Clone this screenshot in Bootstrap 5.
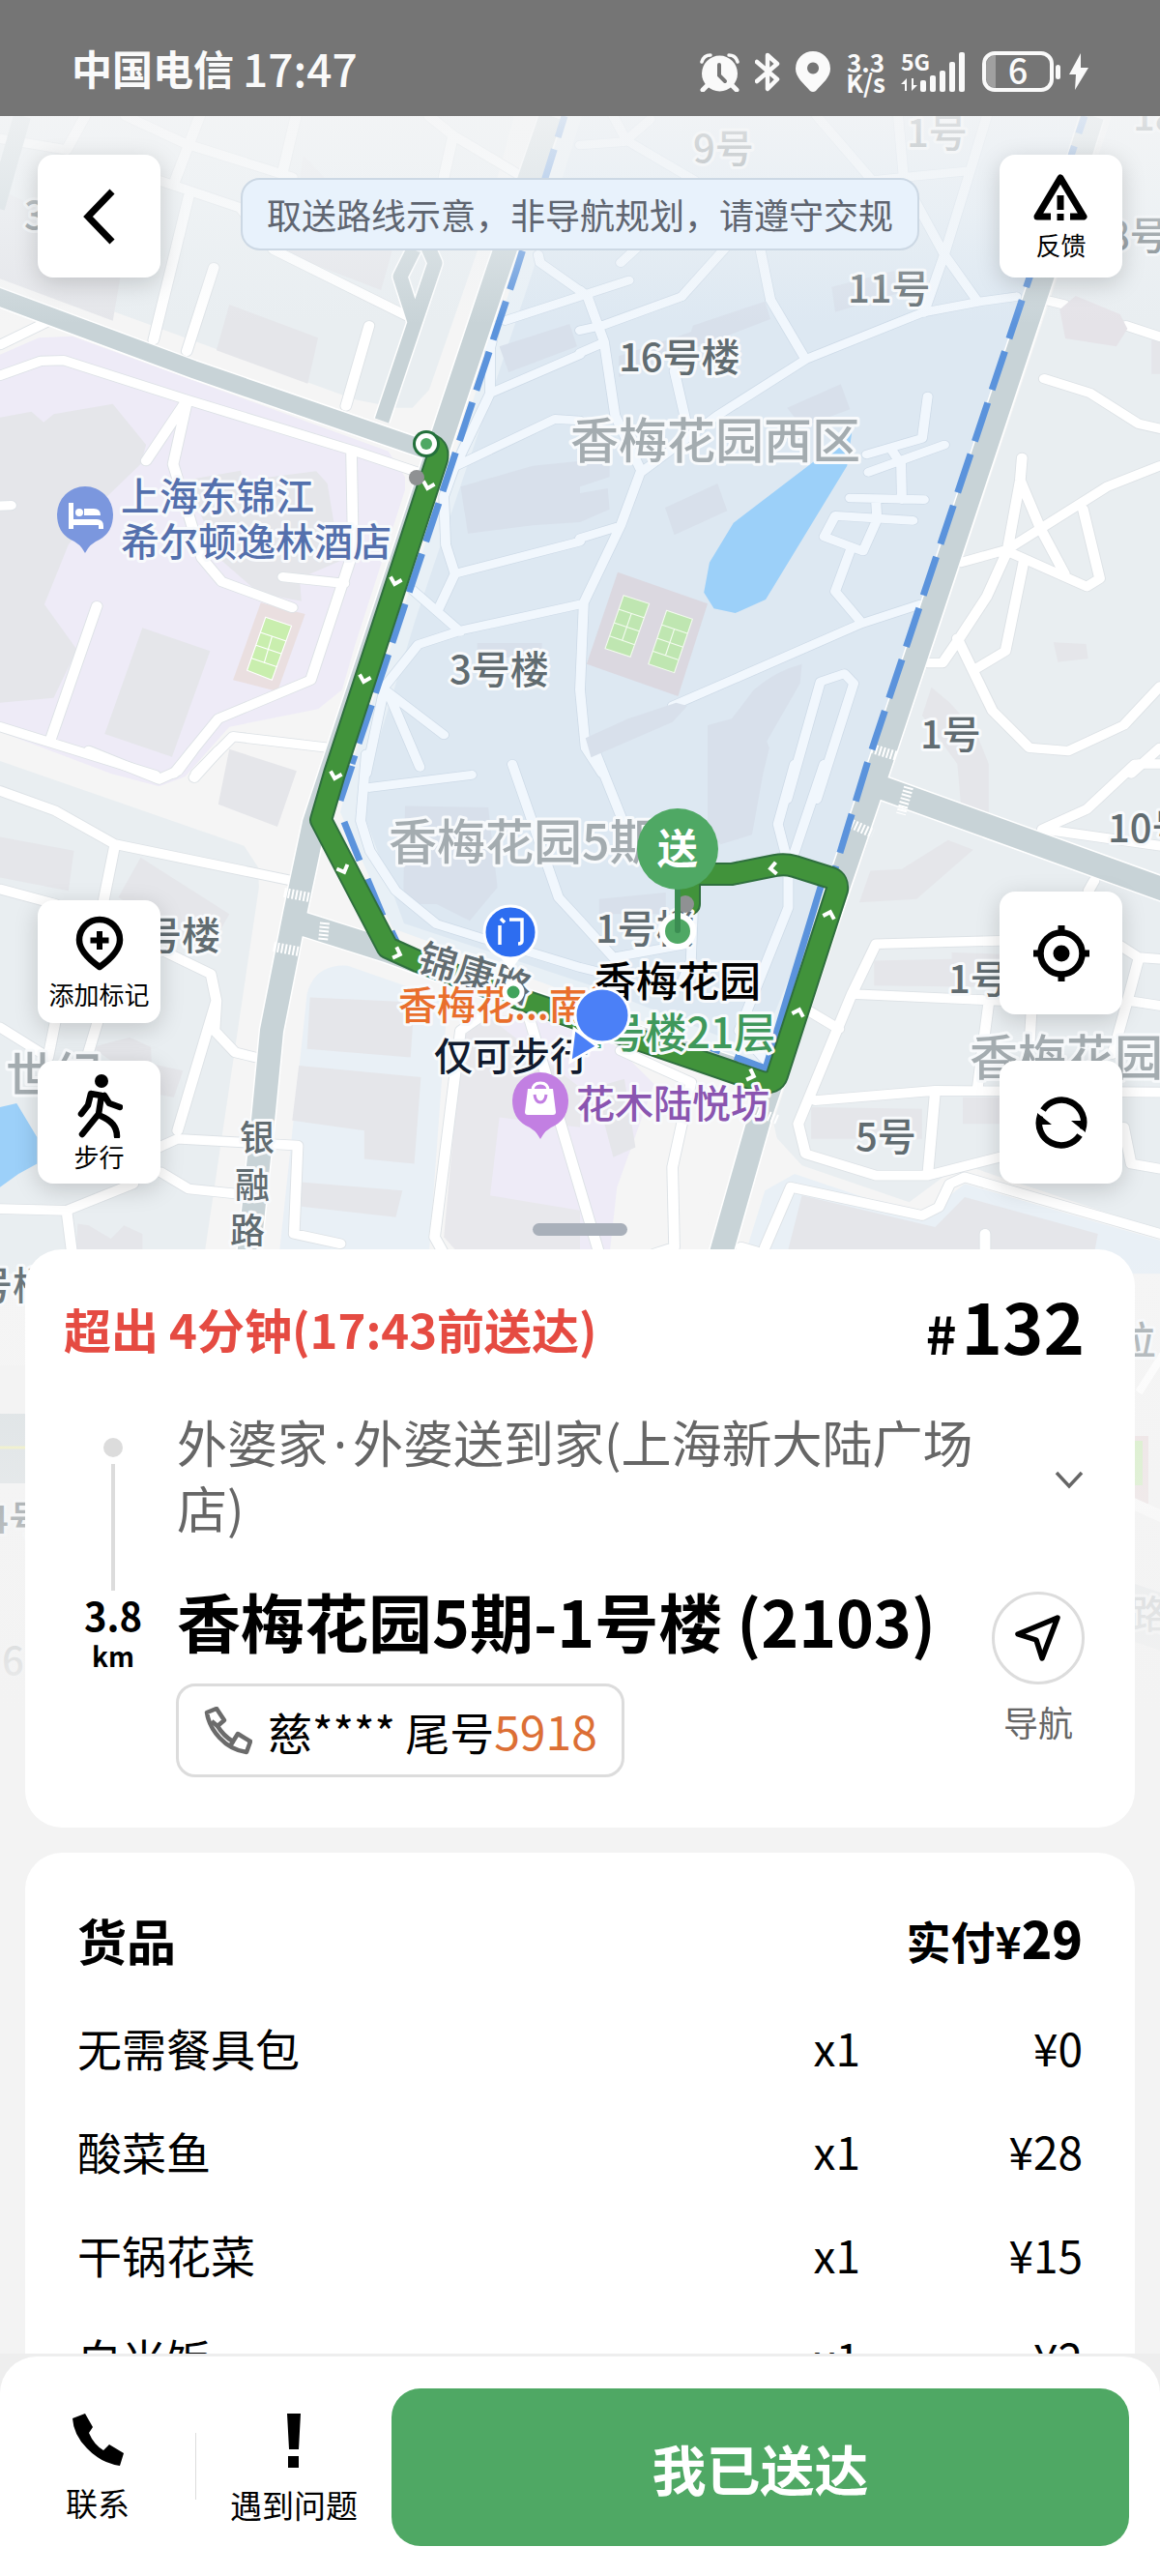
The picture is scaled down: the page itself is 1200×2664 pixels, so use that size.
<!DOCTYPE html>
<html lang="zh-CN">
<head>
<meta charset="utf-8">
<meta name="viewport" content="width=device-width, initial-scale=1">
<title>配送详情</title>
<link href="https://cdn.jsdelivr.net/npm/bootstrap@5.3.0/dist/css/bootstrap.min.css" rel="stylesheet">
<style>
:root { --green: #4fa864; --line: #dcdcdc; --muted: #666; }
body { font-family: "Noto Sans CJK SC", "Noto Sans", sans-serif; color: #000; background: #f3f3f3; }
svg { display: block; flex: none; }
.status-bar { height: 120px; padding: 4px 74px 0; background: #757575; color: #fafafa; flex: none; }
.carrier { font-size: 42px; line-height: 60px; font-weight: 700; }
.clock { font-size: 46px; line-height: 60px; font-weight: 500; margin-left: 9px; }
.net-speed { font-size: 26px; line-height: 21px; font-weight: 700; }
.scroller { overflow-y: auto; scrollbar-width: none; min-height: 0; }
.scroller::-webkit-scrollbar { display: none; }
.map-layer { position: absolute; top: 0; left: 0; width: 100%; height: 1740px; }
.map-layer text { font-family: "Noto Sans CJK SC", sans-serif; font-weight: 500; paint-order: stroke; stroke: #f8fafc; stroke-width: 6px; stroke-linejoin: round; }
.map-stage { padding: 40px 39px 14px; min-height: 1172px; }
.tool { width: 127px; height: 127px; border: 0; border-radius: 16px; background: #fff; color: #000; box-shadow: 0 6px 24px rgba(0,0,0,.17); font-size: 26px; line-height: 30px; padding: 0; }
.route-tip { margin-top: 24px; padding: 0 25px; border: 2px solid #ccd8e4; border-radius: 20px; background: #e8f2fc; color: #5f6570; font-size: 36px; line-height: 71px; }
.tools-left { gap: 39px; }
.tools-right { gap: 48px; }
.grip { width: 98px; height: 13px; border-radius: 7px; background: #a9b0ba; margin-top: 41px; }
.panel { border: 0; border-radius: 38px; margin: 0 26px; background: #fff; }
.order-panel { padding: 42px 52px 52px 40px; }
.late { color: #e54b42; font-size: 49px; line-height: 62px; font-weight: 700; padding-top: 8px; }
.order-no { font-size: 72px; line-height: 72px; font-weight: 700; }
.order-no span { font-size: 54px; line-height: 1; margin-right: 5px; }
.stops { margin-top: 51px; }
.track { width: 102px; padding-top: 30px; margin-right: 15px; flex: none; font-weight: 700; }
.track-dot { width: 20px; height: 20px; border-radius: 50%; background: #dcdcdc; }
.track-line { width: 4px; height: 131px; margin: 7px 0 3px; background: #dcdcdc; }
.dist { font-size: 40px; line-height: 44px; }
.dist-unit { font-size: 28px; line-height: 40px; }
.shop { color: var(--muted); font-size: 52px; line-height: 68px; }
.shop-dot { font-family: "Noto Sans", sans-serif; line-height: 1; padding: 0 6px; }
.dest { font-size: 66px; line-height: 90px; font-weight: 700; margin-top: 37px; white-space: nowrap; }
.call-btn { margin: 21px 0 0 -1px; height: 97px; padding: 0 25px 0 26px; gap: 16px; border: 3px solid var(--line); border-radius: 20px; background: #fff; font-size: 46px; line-height: 60px; white-space: nowrap; color: #000; }
.call-btn em { font-style: normal; color: #dc6f35; font-size: 48px; }
.side-col { width: 96px; flex: none; padding-top: 57px; }
.fold-btn { border: 0; background: none; padding: 0; height: 32px; }
.nav-btn { margin-top: 100px; border: 0; background: none; padding: 0; gap: 14px; color: var(--muted); font-size: 36px; line-height: 48px; }
.nav-ring { width: 96px; height: 96px; border: 3px solid var(--line); border-radius: 50%; }
.goods-panel { margin-top: 26px; padding: 50px 54px 60px; }
.goods-title { font-size: 51px; line-height: 80px; font-weight: 700; margin: 0; }
.paid { font-size: 46px; line-height: 80px; font-weight: 700; }
.paid b { font-size: 52px; line-height: 1; }
.goods { width: 100%; margin-top: 18px; font-size: 46px; line-height: 107px; }
.goods td { padding: 0; }
.goods td:nth-child(2) { width: 100px; text-align: right; }
.goods td:nth-child(3) { width: 230px; text-align: right; }
.dock { flex: none; background: #eeeeee; padding-top: 3px; }
.dock-inner { background: #fff; border-radius: 38px 38px 0 0; padding: 33px 32px 31px 0; }
.dock-item { width: 202px; border: 0; background: none; padding: 26px 0 0; gap: 16px; font-size: 33px; line-height: 44px; color: #000; white-space: nowrap; }
.dock-rule { width: 1px; height: 69px; margin-top: 46px; background: #ddd; }
.done-btn, .done-btn:hover { height: 163px; border: 0; border-radius: 30px; background: var(--green); color: #fff; font-size: 56px; font-weight: 700; line-height: 80px; }
</style>
</head>
<body>
<div class="d-flex flex-column vh-100">
  <header class="status-bar d-flex align-items-center justify-content-between">
    <div class="d-flex align-items-center pt-3"><span class="carrier">中国电信</span><span class="clock">17:47</span></div>
    <div class="d-flex align-items-center pt-4">
      <svg width="41" height="41" viewBox="0 0 41 41" fill="#fafafa"><circle cx="20.500" cy="22" r="18.500"/><path d="M7 35l-4 4M34 35l4 4" stroke="#fafafa" stroke-width="5" stroke-linecap="round"/><path d="M2 10Q4 3 11 3M39 10Q37 3 30 3" fill="none" stroke="#fafafa" stroke-width="3.500" stroke-linecap="round"/><path d="M20 13v11l6 6" fill="none" stroke="#757575" stroke-width="4" stroke-linecap="round"/></svg>
      <svg class="ms-3" width="26" height="41" viewBox="0 0 26 41"><path d="M2 10l21 18-10 10V3l10 9L2 30" fill="none" stroke="#fafafa" stroke-width="4.500" stroke-linecap="round" stroke-linejoin="round"/></svg>
      <svg class="ms-3" width="36" height="42" viewBox="0 0 36 42"><path fill="#fafafa" fill-rule="evenodd" d="M18 0a18 18 0 0 1 18 18c0 9-8 15-15 23q-3 2-6 0C8 33 0 27 0 18A18 18 0 0 1 18 0zm0 11.500a6 6 0 1 0 .1 0z"/></svg>
      <div class="net-speed ms-3 text-center">3.3<br>K/s</div>
      <svg class="ms-3" width="68" height="42" viewBox="0 0 68 42" fill="#fafafa"><text x="0" y="20" font-size="23" font-weight="700" font-family="Noto Sans CJK SC, sans-serif">5G</text><rect x="20" y="30" width="6" height="12" rx="2"/><rect x="30" y="25" width="6" height="17" rx="2"/><rect x="40" y="20" width="6" height="22" rx="2"/><rect x="50" y="11" width="6" height="31" rx="2"/><rect x="60" y="1" width="6" height="41" rx="2"/><path d="M0 34l6-6v13H4v-7zM17 35l-6 6V28h2v7z"/></svg>
      <svg class="ms-3" width="82" height="42" viewBox="0 0 82 42"><path d="M4 14a10 10 0 0 1 10-10v34A10 10 0 0 1 4 28z" fill="#a0a0a0"/><rect x="2" y="2" width="70" height="38" rx="11" fill="none" stroke="#fafafa" stroke-width="4"/><rect x="76" y="14" width="5" height="15" rx="2.500" fill="#fafafa"/><text x="37" y="34" font-size="36" font-weight="500" text-anchor="middle" fill="#fafafa" font-family="Noto Sans CJK SC, sans-serif">6</text></svg>
      <svg class="ms-2" width="20" height="38" viewBox="0 0 20 38"><path fill="#fafafa" d="M12 0L0 22h7L6 38l14-23h-8z"/></svg>
    </div>
  </header>

  <main class="scroller flex-fill position-relative">
    <svg class="map-layer" viewBox="0 120 1200 1740" preserveAspectRatio="xMidYMin slice" role="img" aria-label="配送路线地图">
      <defs>
        <linearGradient id="fadeTop" x1="0" y1="0" x2="0" y2="1"><stop offset="0" stop-color="#f4f5f6" stop-opacity=".85"/><stop offset=".45" stop-color="#f1f4f6" stop-opacity=".6"/><stop offset="1" stop-color="#eef2f5" stop-opacity="0"/></linearGradient>
        <linearGradient id="fadeEnd" x1="0" y1="0" x2="0" y2="1"><stop offset="0" stop-color="#f3f3f3" stop-opacity="0"/><stop offset="1" stop-color="#f3f3f3"/></linearGradient>
        <g id="streets" fill="none" stroke-linecap="round" stroke-linejoin="round">
          <path transform="translate(0 120) scale(.38265 .33333)" d="M0 70L180 105M230 0L180 105M340 0L500 85L790 190M540 0L470 210M800 0L765 170M430 200L650 285L740 415L1100 620M510 250L415 695M578 470L505 730M998 650L935 900M1160 0L1225 60L1200 190M1225 60L1400 180M0 710L125 640"/>
          <path transform="translate(0 280) scale(.38265 .33333)" d="M0 325L110 280L172 278L505 400L960 560L1130 625M500 410L395 590M505 410L468 600L500 720L545 890L600 965L790 1045M950 560L955 870L840 1270L590 1390L470 1560M765 950L930 970M0 1415L420 1565M262 1040L135 1460M890 1480L630 1445L530 1560M-20 730L30 728"/>
          <path transform="translate(0 780) scale(.38265 .34439)" d="M0 110L150 170L310 270L790 380M310 275L280 440M0 405L150 450M440 590L570 660L585 740L580 830L635 895L690 910M585 740L480 1130M0 820L130 910L150 800M235 910L265 800M430 1180L480 1155L645 1165L805 1175L795 1440L920 1470M435 1255L510 1305L640 1320M0 1365L180 1370L360 1290M180 1370L195 1500M1310 780L1245 830L1175 1450L1200 1500M240 -10L430 75L480 50L520 -10M525 70L590 -10M1430 790L1620 1500"/>
          <path transform="translate(600 280) scale(.38265 .33333)" d="M1255 90L1310 105M1475 170L1568 205M1255 335L1380 380L1510 475L1568 490M1195 580L1190 650L1155 870L1100 1010L1020 1150L980 1217L940 1217M1190 650L1245 800L1310 940M1030 905L1155 865L1425 670L1568 605M1155 870L1370 980L1405 955L1360 740M1200 900L1150 1180L1070 1235M1020 1140L1115 1365L1215 1480L1320 1490L1470 1410L1568 1290M1568 1480L1490 1560M1510 1530L1568 1530"/>
          <path transform="translate(600 780) scale(.38265 .34439)" d="M1500 30L1370 165L1250 225L1568 275M1390 380L1375 410M1135 560L800 570L735 720L590 1110L610 1200L800 1265L940 1265L1135 1210M735 720L1135 740M1105 745L1075 1000M610 765L700 825M635 1040L960 1010L1568 1015M960 1015L940 1265M1440 560L1510 610L1568 615M1510 615L1480 740L1568 755M1480 740L1440 900M1220 780L1215 880M1470 1120L1490 1230L1568 1245M500 1480L570 1300L925 1385L970 1360L1000 1290L1040 1270L1568 1440M1095 1560L1095 1440M110 890L300 985L250 1240L255 1480L200 1500M435 1480L560 1520"/>
        </g>
        <g id="lanes" fill="none" stroke-linecap="round" stroke-linejoin="round">
          <path transform="translate(600 120) scale(.38265 .33333)" d="M0 90L120 80M90 0L125 75L190 10M125 75L310 200M640 0L790 200L875 190L1055 170L1100 0M860 0L875 190M1055 170L985 430L930 610M890 230L985 430L1075 575M110 455L200 360M400 400L275 560M485 400L515 570"/>
          <path transform="translate(0 280) scale(.38265 .33333)" d="M1455 -50L1460 -25L1590 80M1365 155L1700 30M1325 380L1568 260M1340 170L1325 240L1325 380L1225 620L1200 700L1205 850L1230 940L1185 1050M1225 610L1500 460L1568 465M1230 940L1568 840M1115 990L1245 1120M1568 1035L1250 1115L1130 1160L1040 1290L990 1560M1040 1300L1200 1440M1050 1310L1135 1540"/>
          <path transform="translate(600 280) scale(.38265 .33333)" d="M0 60L20 80L65 220L95 450L165 620L110 790L10 1030L0 1300L15 1480L60 1560M275 80L60 170L0 185M0 255L60 225M515 90L610 275L925 130L1085 95L1180 80M610 275L370 450L165 625M255 310L285 460M0 830L100 795M940 390L925 520L775 570M780 625L985 540M845 560L868 600L870 710M730 705L930 710M800 710L803 770M900 775L690 760L660 825L765 870L800 780M730 870L690 995L760 1090M250 1350L760 1095L920 1035M560 1640L650 1275L715 1250L740 1280L640 1640"/>
          <path transform="translate(0 780) scale(.38265 .34439)" d="M990 0L975 200L1000 290L1070 410L1180 510L1310 555M1000 100L1275 62M1385 30L1510 430L1568 500M1420 590L1568 640L1640 660"/>
          <path transform="translate(600 780) scale(.38265 .34439)" d="M580 30L535 210L563 330L563 460L430 830L510 930M660 30L575 310M40 -10L130 240M0 500L90 610L290 570M305 480L300 620L270 700"/>
        </g>
        <path id="arterials" fill="none" stroke-linejoin="round" d="M570 120L515 280L468 420L325 851L305 945L281 1066L272 1159L256 1310M1130 120L1078 287L914 780L787 1152L742 1310M905 812L1210 922M302 952L400 983L543 1035L801 1119"/>
        <path id="avenue" fill="none" d="M-10 304L200 382L440 465"/>
        <path id="ramps" fill="none" stroke-linejoin="round" d="M436 240L450 272L429 334L395 435M428 258L414 286L430 336"/>
        <path id="routeLine" fill="none" stroke-linecap="round" stroke-linejoin="round" d="M441 459Q455 461 452 475L346 800L332 848L401 980L432 994L543 1035L677 1081L788 1119Q801 1121 804 1112L866 920Q867 911 860 908L822 896Q812 893 802 895L757 904L722 904Q712 908 713 916L713 935"/>
        <path id="tick" d="M-6 -3L0 3L6 -3" fill="none" stroke="#fff" stroke-width="4"/>
      </defs>

      <rect y="120" width="1200" height="1740" fill="#f5f5f5"/>
      <!-- city blocks and buildings -->
      <g transform="translate(0 120) scale(.38265 .33333)">
        <path fill="#e9eef1" d="M0 0H1390L1290 420L1160 850L1115 905H1075L960 880L315 610L0 500z"/>
        <path fill="#e5e6ea" d="M620 585L860 688L832 830L585 727zM0 230L340 400L305 635L0 505zM820 120L1060 420L1030 540L780 430z"/>
      </g>
      <g transform="translate(0 280) scale(.38265 .33333)">
        <path fill="#eeebf7" d="M0 260L105 208L195 203L1050 560L1095 640V680L960 1160L925 1300L860 1360L620 1415L500 1570L430 1600L300 1560L0 1430z"/>
        <path fill="#e5e6ea" d="M0 455L85 437L118 470L145 445L305 413L395 540L380 600L290 700L185 850L120 1035L208 1175L145 1325L0 1340zM385 1108L568 1180L465 1508L283 1437zM500 650L650 620L660 650L855 622L885 660L920 900L810 955L815 1025L700 1000L600 900z"/>
        <path fill="#eadfe0" d="M705 1030L825 1065L750 1305L630 1270z"/>
        <path fill="#c9eeae" stroke="#fff" stroke-width="3" d="M718 1075L788 1102L735 1270L668 1240zM704 1122L774 1149M692 1162L762 1189M680 1202L750 1229M735 1136L714 1218"/>
      </g>
      <g transform="translate(0 780) scale(.38265 .34439)">
        <path fill="#e9eef1" d="M0 20L660 275L698 340L700 400L545 1560H0z"/>
        <path fill="#e9f0f6" d="M830 720Q850 630 940 635L1210 740L1160 1500H755z"/>
        <path fill="#e8e8ec" d="M1250 850L1310 790L1568 860V1500H1240L1200 1450z"/>
        <path fill="#eeebf7" d="M1350 1090L1568 1120V1370L1325 1325zM1310 780L1420 790L1568 810V1000z"/>
        <path fill="#e5e6ea" d="M620 -15L802 50L750 218L590 150zM0 248L200 290L185 410L0 370zM380 310L620 480L560 600L320 430zM250 880L350 850L408 880L410 930L495 950L470 1030L420 1020zM210 1410L240 1415L300 1455L335 1415L385 1440V1500H205zM838 730L1120 745L1110 910L830 885zM808 935L1138 970L1120 1230L985 1215V1130L790 1100zM815 1285L1088 1310L1070 1390L815 1358z"/>
        <path fill="#9cd0f9" d="M0 1060L45 1048L100 1150V1230L50 1260L0 1300z"/>
      </g>
      <path fill="#e9eef1" d="M1150 120H1200V1300H830L800 1160z"/>
      <g transform="translate(600 780) scale(.38265 .34439)">
        <path fill="#f5f5f5" d="M530 1150L600 1235L890 1345L1030 1230L1568 1430V1560H340L350 1300z"/>
        <path fill="#e9f0f6" d="M500 1310L580 1260L925 1390L1040 1290L1568 1460V1560H430z"/>
        <path fill="#eeebf7" d="M0 800L100 880L200 990L100 1300L80 1500H0z"/>
        <path fill="#e5e6ea" d="M795 620L1005 615V595L1135 600V700L795 695zM625 1060L925 1065V1155H625zM1035 1030H1135V1110H1035zM785 350L870 345L995 258L1063 287L910 435L755 445zM600 1325L960 1420L1040 1330L1400 1440L1390 1500H560zM40 1000L120 975L150 1180L90 1210z"/>
      </g>
      <path fill="#e5e6ea" transform="translate(600 280) scale(.38265 .33333)" d="M1280 1153L1368 1158L1374 1203L1292 1214zM950 1292L1000 1340L1070 1430L1105 1530V1690L1030 1660L1020 1530L925 1380zM1545 215H1568V320H1545z"/>
      <!-- garden compound -->
      <path fill="#e8f0f6" d="M584 120L534 280L364 790L352 840L406 960L566 1018L791 1105L864 894L897 790L1065 287L1122 120z"/>
      <path fill="#dde8f2" d="M602 120L548 290L430 640L372 830L418 955L620 1022L785 1088L864 894L897 790L1065 287L1122 120z"/>
      <g transform="translate(0 280) scale(.38265 .33333)" fill="#d8e0eb"><path d="M1350 235L1540 165L1560 235L1375 315zM1245 670L1440 605L1568 590V780L1440 790L1265 815zM1290 1155H1465V1200H1290z"/></g>
      <g transform="translate(600 280) scale(.38265 .33333)">
        <path fill="#d8e0eb" d="M305 170L500 95L515 150L105 330V265L300 190zM680 50L850 0L860 70L690 128zM560 425L705 352L730 430L600 485zM230 735L372 660L398 745L255 820zM0 600H80V640L0 670zM0 690L75 675L80 740L0 780zM345 1410L410 1390L470 1300Q530 1240 600 1220L595 1280L505 1460L512 1480L495 1560L465 1750L380 1780L345 1740z"/>
        <path fill="#9cd0f9" d="M640 585L735 500L722 605L502 1020L420 1062L362 1048L335 998L350 905L415 782z"/>
        <path fill="#dbd8e0" d="M102 935L345 1033L265 1320L18 1220z"/>
        <path fill="#bfe6b1" stroke="#f3fbef" stroke-width="3" d="M118 1007L187 1033L136 1198L68 1172zM234 1054L304 1081L255 1247L185 1220zM104 1050L173 1076M92 1092L160 1118M80 1133L148 1160M139 1063L114 1147M220 1098L290 1125M208 1140L277 1167M196 1180L265 1207M255 1112L231 1194"/>
      </g>
      <path fill="#d8e0eb" transform="translate(0 780) scale(.38265 .34439)" d="M1095 155L1320 160L1345 400L1270 500L1180 450L1090 450zM1620 435L1800 415V480H1620z"/>

      <use href="#streets" stroke="#dde2e6" stroke-width="33"/>
      <use href="#streets" stroke="#ffffff" stroke-width="28"/>
      <use href="#lanes" stroke="#cddae7" stroke-width="30"/>
      <use href="#lanes" stroke="#f1f7fd" stroke-width="26"/>
      <path fill="#d8e0eb" transform="translate(600 280) scale(.38265 .33333)" d="M15 1450L130 1390L260 1340L290 1350L250 1400L30 1510z"/>
      <path fill="#e5e3e8" transform="translate(600 280) scale(.38265 .33333)" d="M1297 120L1340 78L1460 135L1480 180L1450 235L1312 210z"/>
      <path d="M23 120L-4 215" stroke="#c8d3d7" stroke-width="18"/>
      <use href="#ramps" stroke="#fff" stroke-width="18"/><use href="#ramps" stroke="#c8d3d7" stroke-width="15"/>
      <use href="#avenue" stroke="#fff" stroke-width="21"/><use href="#arterials" stroke="#fff" stroke-width="27"/><use href="#avenue" stroke="#c8d3d7" stroke-width="18"/><use href="#arterials" stroke="#c8d3d7" stroke-width="24"/>
      <g stroke="#fff" stroke-width="10" stroke-dasharray="2 2"><path d="M294 923L320 928M283 979L309 984M902 774L928 782M881 852L903 862M780 1148L804 1158M336 954L334 974M940 814L932 842"/></g>

      <!-- compound boundary -->
      <g fill="none" stroke="#5b93dc" stroke-width="7" stroke-linejoin="round">
        <path d="M584 120L534 280L364 790" stroke-dasharray="42 13" stroke-dashoffset="19"/>
        <path d="M364 792L352 828M356 850L372 890M380 909L396 947M405 963L413 980L430 990M446 999L482 1012M498 1018L534 1031M550 1036L585 1049M720 1078L745 1087M760 1093L792 1105L850 914"/>
        <path d="M1122 120L1065 287L897 790L864 898" stroke-dasharray="42 14" stroke-dashoffset="23"/>
      </g>

      <use href="#routeLine" stroke="#2f6f3e" stroke-width="24"/>
      <use href="#routeLine" stroke="#41933b" stroke-width="20"/>
      <use href="#tick" transform="translate(443 502) rotate(15)"/><use href="#tick" transform="translate(409 601) rotate(15)"/><use href="#tick" transform="translate(377 702) rotate(15)"/><use href="#tick" transform="translate(347 802) rotate(15)"/><use href="#tick" transform="translate(355 899) rotate(-22)"/><use href="#tick" transform="translate(411 986) rotate(-70)"/><use href="#tick" transform="translate(777 1112) rotate(-70)"/><use href="#tick" transform="translate(826 1047) rotate(197)"/><use href="#tick" transform="translate(858 946) rotate(197)"/><use href="#tick" transform="translate(800 898) rotate(85)"/>
      <circle cx="441" cy="459" r="14" fill="#23703b"/><circle cx="441" cy="459" r="11" fill="#fff"/><circle cx="441" cy="459" r="6" fill="#4fa864"/>
      <circle cx="431" cy="494" r="8" fill="#8f9193"/>

      <!-- map edge beside the cards -->
      <rect x="0" y="1412" width="40" height="50" fill="#f3f3f3"/><rect x="0" y="1462" width="40" height="72" fill="#d7dee1"/><path d="M0 1497H40" stroke="#eeeeb5" stroke-width="3"/>
      <rect x="1160" y="1485" width="28" height="70" fill="#ecdfe0"/><rect x="1160" y="1490" width="22" height="46" fill="#cfeebb"/><path d="M1150 1545L1210 1572" stroke="#fff" stroke-width="12"/><path d="M1150 1630L1210 1650L1210 1710L1150 1690z" fill="#dde2e5"/>
      <path d="M1210 1390L1178 1440" stroke="#fff" stroke-width="8"/>

      <!-- place names -->
      <g font-size="40" fill="#616c71">
        <text x="717" y="168">9号</text><text x="938" y="152">1号</text><text x="1172" y="135">18</text><text x="25" y="237">3</text><text x="1146" y="258">8号</text>
        <text x="877" y="313">11号</text><text x="640" y="384">16号楼</text><text x="465" y="707">3号楼</text><text x="952" y="774">1号</text><text x="1146" y="871">10号</text>
        <text x="616" y="975">1号楼</text><text x="981" y="1027">1号</text><text x="885" y="1190">5号</text><text x="148" y="982">号楼</text>
        <text x="-27" y="1344">号楼</text><text x="-14" y="1586">4号</text><text x="2" y="1732">6</text>
        <text transform="translate(430 1003) rotate(17)">锦康路</text>
      </g>
      <g font-size="40" fill="#a4acb0"><text x="1156" y="1401">位</text><text x="1168" y="1684">路</text></g>
      <g font-size="36" fill="#616c71" text-anchor="middle"><text x="266" y="1190">银</text><text x="261" y="1239">融</text><text x="256" y="1286">路</text></g>
      <g font-size="50" fill="#a4acb0"><text x="590" y="474">香梅花园西区</text><text x="402" y="889">香梅花园5期</text><text x="1003" y="1112">香梅花园</text><text x="6" y="1130">世纪</text></g>
      <g font-size="40" fill="#5470ad"><text x="125" y="528">上海东锦江</text><text x="125" y="575">希尔顿逸林酒店</text></g>
      <text x="596" y="1156" font-size="40" fill="#8a55b0">花木陆悦坊</text>
      <g font-size="40"><text x="412" y="1054" fill="#e96f2c">香梅花...南门</text><text x="449" y="1107" fill="#101a2e">仅可步行</text></g>
      <g font-size="43" text-anchor="middle"><text x="701" y="1031" fill="#000">香梅花园</text><text x="701" y="1084" fill="#3f985b">1号楼21层</text></g>

      <!-- pins -->
      <path fill="#7b97de" d="M88 503a29 29 0 0 1 29 29q0 18-14 26-10 4-15 14-5-10-15-14-14-8-14-26a29 29 0 0 1 29-29z"/>
      <path fill="#fff" d="M71 520h5v17h24q7 0 7 7v3h-5v-4H76v4h-5zM87 526h10q7 0 7 7H87z"/><circle cx="82" cy="530" r="4" fill="#fff"/>
      <path fill="#c27fe2" d="M559 1109a29 29 0 0 1 29 29q0 18-14 26-10 4-15 14-5-10-15-14-14-8-14-26a29 29 0 0 1 29-29z"/>
      <path fill="#fff" d="M546 1126h26l3 24q0 3-3 3h-26q-3 0-3-3z"/><path d="M551 1128q0-8 8-8t8 8" fill="none" stroke="#fff" stroke-width="3"/><path d="M553 1132q1 8 6 8t6-8" fill="none" stroke="#c27fe2" stroke-width="3"/>
      <circle cx="531" cy="1026" r="9" fill="#41a35c" stroke="#fff" stroke-width="5"/>
      <path fill="#fff" d="M515 986L528 1004L541 986z"/><circle cx="528" cy="964" r="27" fill="#2d6df0" stroke="#fff" stroke-width="3"/>
      <path d="M517 957v20M518 950l4 4M527 951h13v22q0 3-4 3" fill="none" stroke="#fff" stroke-width="3.500"/>
      <circle cx="709" cy="935" r="9" fill="#8f9193"/>
      <circle cx="701" cy="963" r="16" fill="#4fa864" stroke="#fff" stroke-width="6"/>
      <path d="M701 915V962" stroke="#3b8d52" stroke-width="6" stroke-linecap="round"/><circle cx="701" cy="878" r="42" fill="#4fa864"/>
      <text x="701" y="893" font-size="42" text-anchor="middle" style="fill:#fff;stroke:none;font-weight:700">送</text>
      <path fill="#4b80f7" stroke="#fff" stroke-width="3" d="M594 1064L590 1098L618 1082z"/><circle cx="623" cy="1050" r="28" fill="#4b80f7" stroke="#fff" stroke-width="3"/>

      <rect y="120" width="1200" height="215" fill="url(#fadeTop)"/>
      <rect y="1292" width="1200" height="480" fill="url(#fadeEnd)"/><rect y="1770" width="1200" height="90" fill="#f3f3f3"/>
    </svg>

    <section class="map-stage position-relative d-flex flex-column">
      <div class="d-flex justify-content-between align-items-start">
        <button class="tool d-flex align-items-center justify-content-center" type="button" aria-label="返回"><svg width="36" height="58" viewBox="0 0 36 58"><path d="M31 3L6 29L31 55" fill="none" stroke="#000" stroke-width="7"/></svg></button>
        <div class="route-tip">取送路线示意，非导航规划，请遵守交规</div>
        <button class="tool d-flex flex-column align-items-center justify-content-center gap-2" type="button"><svg width="58" height="50" viewBox="0 0 58 50"><path d="M19 44H5L29 4L53 44H39" fill="none" stroke="#000" stroke-width="7" stroke-linejoin="round"/><path d="M29 22v15M29 41v7" stroke="#000" stroke-width="7"/></svg>反馈</button>
      </div>
      <div class="d-flex justify-content-between align-items-end mt-auto">
        <div class="d-flex flex-column tools-left">
          <button class="tool d-flex flex-column align-items-center justify-content-center gap-2" type="button"><svg width="50" height="58" viewBox="0 0 50 58"><path d="M25 53Q4 38 4 25a21 21 0 0 1 42 0Q46 38 25 53z" fill="none" stroke="#000" stroke-width="6.500" stroke-linejoin="round"/><path d="M25 16v19M15.500 25.500h19" stroke="#000" stroke-width="6"/></svg>添加标记</button>
          <button class="tool d-flex flex-column align-items-center justify-content-center gap-1" type="button"><svg width="48" height="66" viewBox="0 0 48 66"><circle cx="26" cy="7" r="7" fill="#000"/><path d="M15 20L12 32L5 41M26 22L23 41L6 62M29 22L34 30L45 34M25 43Q42 50 42 64M26 22L15 20" fill="none" stroke="#000" stroke-width="6.500" stroke-linejoin="round" stroke-linecap="round"/></svg>步行</button>
        </div>
        <div class="d-flex flex-column tools-right">
          <button class="tool d-flex align-items-center justify-content-center" type="button" aria-label="定位"><svg width="60" height="60" viewBox="0 0 60 60"><circle cx="30" cy="30" r="21.500" fill="none" stroke="#000" stroke-width="6.500"/><circle cx="30" cy="30" r="8.500"/><path d="M30 1v9M30 50v9M1 30h9M50 30h9" stroke="#000" stroke-width="7"/></svg></button>
          <button class="tool d-flex align-items-center justify-content-center" type="button" aria-label="刷新"><svg width="56" height="54" viewBox="0 0 56 54"><path d="M9 14A23 23 0 0 1 50 34M47 40A23 23 0 0 1 6 20" fill="none" stroke="#000" stroke-width="6.500"/><path d="M53 37V25L38 25zM3 17V29L18 29z"/></svg></button>
        </div>
      </div>
      <div class="grip align-self-center"></div>
    </section>

    <article class="card panel order-panel position-relative">
      <div class="d-flex justify-content-between align-items-center">
        <div class="late">超出 4分钟(17:43前送达)</div>
        <div class="order-no"><span>#</span>132</div>
      </div>
      <div class="stops d-flex">
        <div class="track d-flex flex-column align-items-center"><div class="track-dot"></div><div class="track-line"></div><div class="dist">3.8</div><div class="dist-unit">km</div></div>
        <div class="flex-fill">
          <div class="shop">外婆家<span class="shop-dot">·</span>外婆送到家(上海新大陆广场店)</div>
          <div class="dest">香梅花园5期-1号楼 (2103)</div>
          <button class="call-btn d-inline-flex align-items-center" type="button"><svg width="50" height="50" viewBox="0 0 50 50" fill="none" stroke="#6b6b6b" stroke-width="4.500" stroke-linejoin="round"><path d="M3 6L13 2L21 14L14 20Q20 30 30 36L35 28L48 36L44 47Q28 45 16 32Q5 20 3 6z"/><path d="M14 20L8 15M30 36L27 41"/></svg><span>慈**** 尾号<em>5918</em></span></button>
        </div>
        <div class="side-col d-flex flex-column align-items-end">
          <button class="fold-btn d-flex align-items-center" type="button" aria-label="展开"><svg width="32" height="20" viewBox="0 0 32 20"><path d="M3 3L16 17L29 3" fill="none" stroke="#666" stroke-width="3.500"/></svg></button>
          <button class="nav-btn d-flex flex-column align-items-center" type="button"><span class="nav-ring d-flex align-items-center justify-content-center"><svg width="50" height="52" viewBox="0 0 50 52"><path d="M45 5L4 22L23 28L29 47z" fill="none" stroke="#000" stroke-width="5.500" stroke-linejoin="round"/></svg></span>导航</button>
        </div>
      </div>
    </article>

    <article class="card panel goods-panel position-relative">
      <div class="d-flex justify-content-between align-items-center">
        <h2 class="goods-title">货品</h2>
        <div class="paid">实付¥<b>29</b></div>
      </div>
      <table class="goods">
        <tbody>
          <tr><td>无需餐具包</td><td>x1</td><td>¥0</td></tr>
          <tr><td>酸菜鱼</td><td>x1</td><td>¥28</td></tr>
          <tr><td>干锅花菜</td><td>x1</td><td>¥15</td></tr>
          <tr><td>白米饭</td><td>x1</td><td>¥2</td></tr>
        </tbody>
      </table>
    </article>
  </main>

  <footer class="dock">
    <div class="dock-inner d-flex align-items-start">
      <button class="dock-item d-flex flex-column align-items-center" type="button"><svg width="54" height="54" viewBox="0 0 54 54"><path d="M1 5L14 0L22 14L18 20Q23 32 33 38L39 32L54 41L50 54Q30 51 16 36Q2 22 1 5z"/></svg>联系</button>
      <div class="dock-rule"></div>
      <button class="dock-item d-flex flex-column align-items-center" type="button"><svg width="16" height="56" viewBox="0 0 16 56"><path d="M1 0h14l-2 37H3zM2 44h11v12H2z"/></svg>遇到问题</button>
      <button class="btn done-btn flex-fill" type="button">我已送达</button>
    </div>
  </footer>
</div>
<script src="https://cdn.jsdelivr.net/npm/bootstrap@5.3.0/dist/js/bootstrap.bundle.min.js"></script>
</body>
</html>
